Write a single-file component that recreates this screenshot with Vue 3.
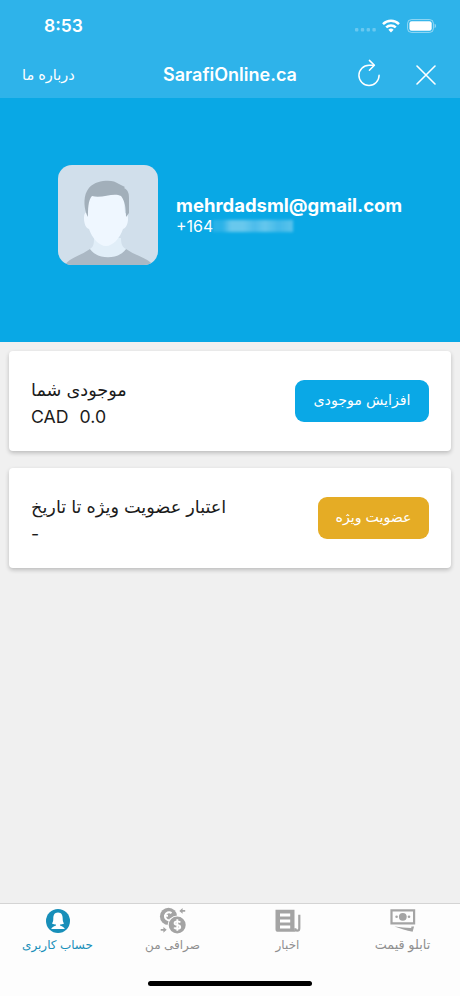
<template>
  <div class="screen">
    <header class="topbar">
      <div class="statusbar">
        <span class="time">8:53</span>
        <div class="status-icons">
          <svg class="signal" width="22" height="4" viewBox="0 0 22 4" fill="#fff" fill-opacity="0.28">
            <rect v-for="n in 4" :key="n" :x="(n - 1) * 5.8" y="0" width="3.4" height="3.6" rx="1" />
          </svg>
          <svg class="wifi" width="18" height="14" viewBox="0 0 18 14" fill="none" stroke="#fff" stroke-width="2.5">
            <path d="M1 5.1a11.5 11.5 0 0 1 16 0" />
            <path d="M4.2 8.4a7 7 0 0 1 9.6 0" />
            <path d="M9 13.4l-2.6-2.7a3.8 3.8 0 0 1 5.2 0z" fill="#fff" stroke="none" />
          </svg>
          <svg class="battery" width="30" height="14" viewBox="0 0 30 14">
            <rect x="0.6" y="0.6" width="25.8" height="12.8" rx="3.8" fill="none" stroke="#fff" stroke-opacity="0.5" stroke-width="1" />
            <rect x="2.4" y="2.3" width="22.3" height="9.4" rx="2.2" fill="#fff" />
            <path d="M27.6 4.8c1.8.6 1.8 3.8 0 4.4z" fill="#fff" fill-opacity="0.5" />
          </svg>
        </div>
      </div>
      <div class="navbar">
        <span class="about" dir="rtl">درباره ما</span>
        <h1 class="title">SarafiOnline.ca</h1>
        <div class="actions">
          <svg class="reload" width="24" height="28" viewBox="0 0 24 28" fill="none" stroke="#fff" stroke-width="1.5" stroke-linecap="round" stroke-linejoin="round">
            <path d="M16.7 6.2H12A10.1 10.1 0 1 0 22.1 16.3" />
            <path d="M12.4 1.4l5 4.8-5 5" />
          </svg>
          <svg width="20" height="20" viewBox="0 0 20 20" fill="none" stroke="#fff" stroke-width="1.6" stroke-linecap="round">
            <path d="M1 1l18 18M19 1L1 19" />
          </svg>
        </div>
      </div>
    </header>

    <section class="profile">
      <svg class="avatar" width="100" height="100" viewBox="0 0 100 100">
        <rect width="100" height="100" fill="#d1dfeb" />
        <path d="M7 100c4-7 15-9 25-16 10 7 26 7 36 0 10 7 22 9 27 16z" fill="#abb8c4" />
        <path d="M32 84c4-2 4-7 4-11h27c0 5 1 9 5 11-7 11-29 11-36 0z" fill="#e1eef8" />
        <path d="M29 48c-2-1-3 1-3 5 0 6 2 10 5 11 3 9 10 17 17 17s14-8 17-17c3-1 5-5 5-10 0-4-1-6-3-6l-1-16-10-9-22 1-6 8z" fill="#eff7ff" />
        <path d="M30 52c-4-7-5-19-1-26 3-6 9-9 16-10 7-1 12 0 16 3l6 3-1 1c4 2 5 5 5 10v15l-3 4c0-9-1-16-5-21-8-4-19 3-29 0-4 4-4 14-4 21z" fill="#a2afba" />
      </svg>
      <div class="identity">
        <div class="email">mehrdadsml@gmail.com</div>
        <div class="phone">+164<span class="masked"></span></div>
      </div>
    </section>

    <main class="cards">
      <div class="card">
        <div class="info">
          <div class="label" dir="rtl">موجودی شما</div>
          <div class="amount"><span>CAD</span><span>0.0</span></div>
        </div>
        <button class="btn btn-balance" dir="rtl"><span>افزایش موجودی</span></button>
      </div>
      <div class="card">
        <div class="info">
          <div class="label" dir="rtl">اعتبار عضویت ویژه تا تاریخ</div>
          <div class="amount">-</div>
        </div>
        <button class="btn btn-vip" dir="rtl"><span>عضویت ویژه</span></button>
      </div>
    </main>

    <footer class="tabbar">
      <nav class="tabs">
        <a class="tab active">
          <svg width="26" height="26" viewBox="0 0 26 26">
            <circle cx="13" cy="13" r="12" fill="#188fb9" />
            <path d="M13 4.6c-3.7 0-4.7 2.8-4.7 5.8 0 2.4-.5 3.9-1.3 5 1.3.8 2.8 1 4 1v1c-1.5.9-4.2 1.3-4.8 3.6h13.6c-.6-2.3-3.3-2.7-4.8-3.6v-1c1.2 0 2.7-.2 4-1-.8-1.1-1.3-2.6-1.3-5 0-3-1-5.8-4.7-5.8z" fill="#fff" />
          </svg>
          <span dir="rtl">حساب کاربری</span>
        </a>
        <a class="tab">
          <svg width="28" height="28" viewBox="0 0 28 28">
            <circle cx="9.5" cy="9.4" r="8.6" fill="#a4a4a4" />
            <path d="M12.5 6.1a4 4 0 1 0-1.5 7M5 8.8h4" fill="none" stroke="#fff" stroke-width="2" />
            <circle cx="18.2" cy="18" r="9.6" fill="#fff" />
            <circle cx="18.2" cy="18" r="8.5" fill="#a4a4a4" />
            <path d="M21.2 15.5c-.8-1.5-5.6-1.6-5.6.7 0 2.4 5.6 1.2 5.6 3.7 0 2.4-5 2.2-6 .5M18.3 12.3v11.4" fill="none" stroke="#fff" stroke-width="1.9" />
            <path d="M20.3 3.9l3.3-2.9v2h2.6v1.8h-2.6v2zM7.7 22.8L4.4 20v2H1.7v1.7h2.7v2z" fill="#a4a4a4" />
          </svg>
          <span dir="rtl">صرافی من</span>
        </a>
        <a class="tab">
          <svg width="26" height="26" viewBox="0 0 26 26">
            <path d="M.5 1.7h19v18.5c0 1.3.4 2.6 1.2 3.6H3.1A2.6 2.6 0 0 1 .5 21.2z" fill="#a4a4a4" />
            <path d="M5 7h10.2M5 13h10.2M5 19h10.2" stroke="#fff" stroke-width="2.9" />
            <path d="M24.3 6.7v13.5c0 3.3-4 3.3-4 0" fill="none" stroke="#a4a4a4" stroke-width="2.2" />
          </svg>
          <span dir="rtl">اخبار</span>
        </a>
        <a class="tab">
          <svg width="26" height="26" viewBox="0 0 26 26">
            <path d="M1.5 2.3h22.6v13H1.5z" fill="none" stroke="#a4a4a4" stroke-width="2.2" />
            <circle cx="12.8" cy="8.8" r="3.9" fill="#a4a4a4" />
            <circle cx="6.6" cy="8.8" r="1.3" fill="#a4a4a4" />
            <circle cx="19" cy="8.8" r="1.3" fill="#a4a4a4" />
            <path d="M4.5 18.6c6 .6 11 1.3 16.7 1.5l.2-1.6h2.7l-1.5 5.3c-6.2-1.1-12.2-3-18.1-5.2z" fill="#a4a4a4" />
          </svg>
          <span class="prices" dir="rtl">تابلو قیمت</span>
        </a>
      </nav>
      <div class="home-indicator"></div>
    </footer>
  </div>
</template>

<script setup>
</script>

<style>
body {
  margin: 0;
}
</style>

<style scoped>
.screen {
  width: 460px;
  height: 996px;
  display: flex;
  flex-direction: column;
  overflow: hidden;
  background: #f0f0f0;
  font-family: Inter, "DejaVu Sans", sans-serif;
}

.topbar {
  height: 98px;
  flex: none;
  background: #2eb3ea;
  color: #fff;
}

.statusbar {
  height: 51px;
  padding: 0 23px 0 44px;
  display: flex;
  align-items: center;
  justify-content: space-between;
}

.time {
  font-size: 17.5px;
  font-weight: 600;
}

.status-icons {
  display: flex;
  align-items: center;
}

.signal {
  margin: 9px 5px 0 0;
}

.wifi {
  margin-right: 7px;
}

.navbar {
  height: 47px;
  display: grid;
  grid-template-columns: 1fr 136px 1fr;
  align-items: center;
}

.about {
  justify-self: start;
  margin-left: 22px;
  font-size: 14.5px;
}

.title {
  margin: 0;
  font-size: 18px;
  font-weight: 600;
  line-height: 47px;
  text-align: center;
  white-space: nowrap;
}

.actions {
  display: flex;
  align-items: center;
  justify-content: flex-end;
  gap: 35px;
  padding-right: 24px;
}

.reload {
  margin-top: -4px;
}

.profile {
  height: 244px;
  flex: none;
  box-sizing: border-box;
  padding: 67px 0 0 58px;
  display: flex;
  align-items: flex-start;
  gap: 18px;
  background: #09a8e5;
  color: #fff;
}

.avatar {
  border-radius: 14px;
}

.identity {
  padding-top: 28px;
}

.email {
  font-size: 18.5px;
  font-weight: 700;
  line-height: 24px;
}

.phone {
  display: flex;
  align-items: center;
  font-size: 16px;
  line-height: 18px;
}

.masked {
  width: 80px;
  height: 12px;
  background: linear-gradient(90deg, #2bb2e8 0 12%, #68c8ed 22% 38%, #4cbceb 52%, #65c7ed 65%, #43b9e9 82%, #5bc3ec);
  filter: blur(1.5px);
}

.cards {
  flex: 1;
  padding: 9px 9px 0;
}

.card {
  height: 100px;
  box-sizing: border-box;
  margin-bottom: 17px;
  padding: 0 22px;
  display: flex;
  align-items: center;
  justify-content: space-between;
  background: #fff;
  border-radius: 4px;
  box-shadow: 0 2px 4px rgba(0, 0, 0, 0.22);
}

.info {
  padding-top: 4px;
  color: #1b1b1b;
  font-size: 17.7px;
}

.label {
  width: max-content;
  line-height: 27px;
}

.amount {
  display: flex;
  gap: 11px;
  line-height: 28px;
}

.btn {
  height: 42px;
  border: none;
  border-radius: 9px;
  padding: 0 0 3px;
  color: #fff;
  font-family: inherit;
  font-size: 14.2px;
}

.btn-balance {
  width: 134px;
  background: #0aa8e6;
}

.btn-vip {
  width: 111px;
  background: #e5ac25;
}

.tabbar {
  height: 93px;
  flex: none;
  box-sizing: border-box;
  border-top: 1px solid #d4d4d4;
  background: #fdfdfd;
}

.tabs {
  height: 77px;
  display: flex;
}

.tab {
  flex: 1;
  display: flex;
  flex-direction: column;
  align-items: center;
  color: #8f8f8f;
  font-size: 12px;
}

.tab svg {
  height: 28px;
  margin-top: 3px;
}

.tab span {
  line-height: 20px;
  white-space: nowrap;
}

.tab .prices {
  font-size: 12.8px;
}

.active {
  color: #188fb9;
}

.home-indicator {
  width: 164px;
  height: 5px;
  margin: 0 auto;
  border-radius: 3px;
  background: #000;
}
</style>
